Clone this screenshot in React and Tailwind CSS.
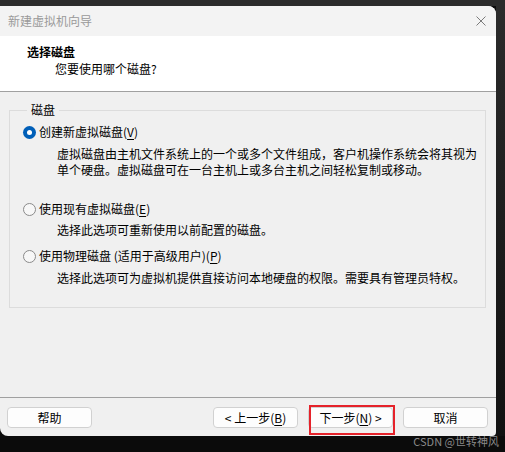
import React from 'react';

const font = "font-['Noto_Sans_CJK_SC','Noto_Sans',sans-serif]";

const Key = ({ k }) => (
  <>(<span className="underline underline-offset-2">{k}</span>)</>
);

const Radio = ({ checked }) =>
  checked ? (
    <span className="w-[13px] h-[13px] rounded-full bg-[#005fb8] flex items-center justify-center shrink-0">
      <span className="w-[5px] h-[5px] rounded-full bg-white" />
    </span>
  ) : (
    <span className="w-[13px] h-[13px] rounded-full border border-[#8a8a8a] bg-[#f7f7f7] shrink-0" />
  );

const Option = ({ checked, label, k, className = '' }) => (
  <div className={`flex items-center gap-[3px] h-4 ${className}`}>
    <Radio checked={checked} />
    <span>{label}<Key k={k} /></span>
  </div>
);

const Desc = ({ children, className = '' }) => (
  <p className={`pl-[34px] whitespace-nowrap ${className}`}>{children}</p>
);

const Btn = ({ children }) => (
  <button className="w-[85px] h-[21px] rounded-[4px] border border-[#d1d1d1] bg-[#fdfdfd] text-[12px] leading-none text-black flex items-center justify-center">
    {children}
  </button>
);

export default function App() {
  return (
    <div className={`w-[505px] h-[452px] bg-[#0b0b0b] flex flex-col overflow-hidden ${font} text-[12px] leading-4 text-black`}>
      <div className="h-[6px] bg-[#2b2b2b] shrink-0" />
      <div className="flex h-[430px] shrink-0">
        <div className="w-[496px] h-full flex flex-col bg-[#f0f0f0] rounded-tr-[8px] rounded-bl-[8px] rounded-br-[4px] overflow-hidden">
          {/* title bar */}
          <div className="h-[30px] bg-[#f3f3f3] flex items-center justify-between pl-2 pr-[10px] shrink-0">
            <span className="text-[#9a9a9a]">新建虚拟机向导</span>
            <svg width="10" height="10" viewBox="0 0 10 10" className="text-[#7a7a7a]">
              <path d="M0.5 0.5 L9.5 9.5 M9.5 0.5 L0.5 9.5" stroke="currentColor" strokeWidth="1" />
            </svg>
          </div>
          {/* header */}
          <div className="h-[56px] bg-white border-b border-[#a0a0a0] pt-2 shrink-0">
            <div className="pl-[27px] font-bold">选择磁盘</div>
            <div className="pl-[55px] mt-px">您要使用哪个磁盘?</div>
          </div>
          {/* body */}
          <div className="flex-1 px-[9px] pt-[10px] border-b border-[#a0a0a0]">
            <fieldset className="w-[477px] border border-[#dcdcdc] pl-[13px] pt-[6px] pb-[21px]">
              <legend className="ml-[4px] px-[4px]">磁盘</legend>
              <Option checked label="创建新虚拟磁盘" k="V" />
              <Desc className="mt-[6px]">
                虚拟磁盘由主机文件系统上的一个或多个文件组成，客户机操作系统会将其视为<br />
                单个硬盘。虚拟磁盘可在一台主机上或多台主机之间轻松复制或移动。
              </Desc>
              <Option label="使用现有虚拟磁盘" k="E" className="mt-[23px]" />
              <Desc className="mt-[5px]">选择此选项可重新使用以前配置的磁盘。</Desc>
              <Option label="使用物理磁盘 (适用于高级用户)" k="P" className="mt-[10px]" />
              <Desc className="mt-[6px]">选择此选项可为虚拟机提供直接访问本地硬盘的权限。需要具有管理员特权。</Desc>
            </fieldset>
          </div>
          {/* footer */}
          <div className="h-[38px] flex items-start justify-between pl-[7px] pr-[8px] pt-[9px] shrink-0">
            <Btn>帮助</Btn>
            <div className="flex gap-[10px]">
              <Btn>&lt; 上一步<Key k="B" /></Btn>
              <div className="relative">
                <Btn>下一步<Key k="N" /> &gt;</Btn>
                <div className="absolute left-[1px] -right-[2px] -top-[2px] -bottom-[7px] border-2 border-[#e5222a]" />
              </div>
              <Btn>取消</Btn>
            </div>
          </div>
        </div>
        <div className="flex-1 bg-gradient-to-b from-[#2b2b2b] to-[#111111]" />
      </div>
      <div className="flex justify-end pr-[6px] -mt-[2px]">
        <span className="text-[11px] leading-[14px] text-[#8a8a8a]">CSDN @世转神风</span>
      </div>
    </div>
  );
}
